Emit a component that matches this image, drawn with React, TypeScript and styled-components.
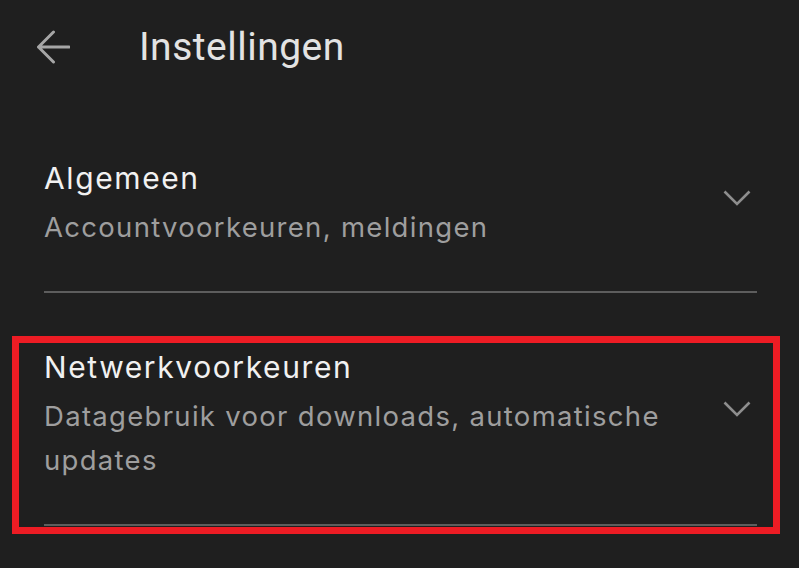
import { FC } from 'react'
import styled, { createGlobalStyle } from 'styled-components'

interface SettingItem {
  title: string
  subtitle: string
  highlighted?: boolean
}

const items: SettingItem[] = [
  { title: 'Algemeen', subtitle: 'Accountvoorkeuren, meldingen' },
  {
    title: 'Netwerkvoorkeuren',
    subtitle: 'Datagebruik voor downloads, automatische updates',
    highlighted: true,
  },
]

const BackArrow: FC = () => (
  <ArrowSvg viewBox="0 0 34 34" aria-hidden>
    <path
      d="M2.5 17H33 M17.5 2L2.5 17L17.5 32"
      fill="none"
      stroke="currentColor"
      strokeWidth="3"
      strokeLinecap="round"
      strokeLinejoin="round"
    />
  </ArrowSvg>
)

const Chevron: FC = () => (
  <ChevronSvg viewBox="0 0 28 16" aria-hidden>
    <polyline
      points="1.5,1.5 14,14 26.5,1.5"
      fill="none"
      stroke="currentColor"
      strokeWidth="2.6"
    />
  </ChevronSvg>
)

export default function App() {
  return (
    <>
      <GlobalStyle />
      <Screen>
        <Header>
          <BackArrow />
          <Title>Instellingen</Title>
        </Header>
        <List>
          {items.map((item) => (
            <Item key={item.title}>
              <Texts>
                <ItemTitle>{item.title}</ItemTitle>
                <ItemSubtitle>{item.subtitle}</ItemSubtitle>
              </Texts>
              <Chevron />
              {item.highlighted && <Highlight />}
            </Item>
          ))}
        </List>
      </Screen>
    </>
  )
}

const GlobalStyle = createGlobalStyle`
  html, body {
    margin: 0;
    padding: 0;
    background: #1f1f1f;
  }
  body {
    font-family: Inter, Roboto, "Liberation Sans", sans-serif;
  }
`

const Screen = styled.div`
  width: 799px;
  height: 568px;
  overflow: hidden;
  background: #1f1f1f;
`

const Header = styled.div`
  display: flex;
  align-items: center;
  height: 94px;
  padding-left: 36px;
  gap: 69px;
`

const ArrowSvg = styled.svg`
  width: 34px;
  height: 34px;
  color: #a6a6a6;
  flex-shrink: 0;
`

const Title = styled.h1`
  margin: 0;
  font-family: Roboto, "Liberation Sans", sans-serif;
  font-size: 39px;
  line-height: 40px;
  font-weight: 400;
  letter-spacing: 0.5px;
  color: #e3e3e3;
`

const List = styled.div`
  display: flex;
  flex-direction: column;
  padding: 10px 42px 0 44px;
`

const Item = styled.div`
  position: relative;
  display: flex;
  align-items: center;
  justify-content: space-between;
  padding: 54px 0 42px;
  border-bottom: 2px solid #5d5d5d;
`

const Texts = styled.div`
  display: flex;
  flex-direction: column;
  max-width: 650px;
`

const ItemTitle = styled.div`
  font-size: 30px;
  line-height: 40px;
  letter-spacing: 1.6px;
  color: #f1f1f1;
  margin-bottom: 7px;
`

const ItemSubtitle = styled.div`
  font-size: 27.5px;
  line-height: 44px;
  letter-spacing: 1.3px;
  color: #9e9e9e;
`

const ChevronSvg = styled.svg`
  width: 28px;
  height: 16px;
  color: #8e8e8e;
  margin: 0 6px 12px 0;
  flex-shrink: 0;
`

const Highlight = styled.div`
  position: absolute;
  left: -32px;
  right: -23px;
  top: 43px;
  bottom: -10px;
  border: 7px solid #ed1c24;
  pointer-events: none;
`
